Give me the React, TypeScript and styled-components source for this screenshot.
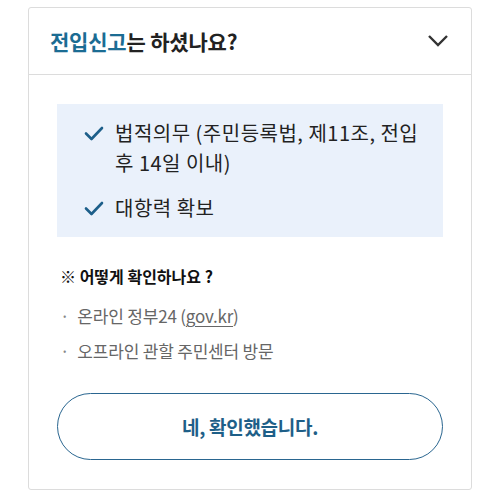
import styled, { createGlobalStyle } from 'styled-components';

const GlobalStyle = createGlobalStyle`
  body {
    margin: 0;
    background: #ffffff;
    font-family: "Noto Sans CJK KR", "Noto Sans", sans-serif;
  }
`;

const Page = styled.div`
  padding: 7px 28px 10px 28px;
`;

const Card = styled.div`
  width: 444px;
  box-sizing: border-box;
  border: 1px solid #dcdcdc;
  border-radius: 3px;
  background: #fff;
`;

const Header = styled.div`
  height: 66px;
  display: flex;
  align-items: center;
  justify-content: space-between;
  padding: 0 22px 0 21px;
  border-bottom: 1px solid #dcdcdc;
`;

const Title = styled.h2`
  margin: 0;
  font-size: 21px;
  font-weight: 700;
  color: #222;
  letter-spacing: -0.2px;
`;

const Accent = styled.span`
  color: #1b6c93;
`;

const Body = styled.div`
  padding: 29px 28px 29px 28px;
`;

const InfoBox = styled.ul`
  margin: 0;
  list-style: none;
  background: #eaf1fb;
  padding: 14px 18px 14px 27px;
  display: flex;
  flex-direction: column;
  gap: 15px;
`;

const CheckItem = styled.li`
  display: flex;
  align-items: flex-start;
  gap: 11px;
  font-size: 20px;
  line-height: 30px;
  color: #222;
  letter-spacing: 0.5px;
`;

const CheckIcon = styled.svg`
  flex: none;
  width: 20px;
  height: 30px;
`;

const Question = styled.h3`
  margin: 27px 0 0 3px;
  font-size: 16px;
  font-weight: 700;
  color: #111;
  line-height: 24px;
`;

const Methods = styled.ul`
  margin: 16px 0 0 0;
  padding: 0 0 0 3px;
  list-style: none;
  display: flex;
  flex-direction: column;
  gap: 11px;
`;

const Method = styled.li`
  display: flex;
  gap: 8px;
  font-size: 17px;
  line-height: 24px;
  color: #666;
  letter-spacing: -0.2px;
`;

const Dot = styled.span`
  color: #888;
`;

const Link = styled.span`
  text-decoration: underline;
  text-underline-offset: 3px;
  text-decoration-thickness: 1px;
`;

const ConfirmButton = styled.button`
  margin-top: 30px;
  width: 100%;
  height: 67px;
  border: 1.5px solid #2a6690;
  border-radius: 34px;
  background: #fff;
  color: #1e5f88;
  font-family: "Noto Sans CJK KR", "Noto Sans", sans-serif;
  font-size: 19px;
  font-weight: 700;
  letter-spacing: -0.3px;
`;

const Check = () => (
  <CheckIcon viewBox="0 0 20 30">
    <path d="M2 15.5 L7.5 21 L18 10" fill="none" stroke="#1d5f8a" strokeWidth="2.6" strokeLinecap="round" strokeLinejoin="round" />
  </CheckIcon>
);

const App = () => {
  return (
    <Page>
      <GlobalStyle />
      <Card>
        <Header>
          <Title>
            <Accent>전입신고</Accent>는 하셨나요?
          </Title>
          <svg width="22" height="14" viewBox="0 0 22 14">
            <path d="M2 2 L11 11 L20 2" fill="none" stroke="#333" strokeWidth="2.4" />
          </svg>
        </Header>
        <Body>
          <InfoBox>
            <CheckItem>
              <Check />
              <span>법적의무 (주민등록법, 제11조, 전입 후 14일 이내)</span>
            </CheckItem>
            <CheckItem>
              <Check />
              <span>대항력 확보</span>
            </CheckItem>
          </InfoBox>
          <Question>※ 어떻게 확인하나요 ?</Question>
          <Methods>
            <Method>
              <Dot>·</Dot>
              <span>
                온라인 정부24 (<Link>gov.kr</Link>)
              </span>
            </Method>
            <Method>
              <Dot>·</Dot>
              <span>오프라인 관할 주민센터 방문</span>
            </Method>
          </Methods>
          <ConfirmButton>네, 확인했습니다.</ConfirmButton>
        </Body>
      </Card>
    </Page>
  );
};

export default App;
